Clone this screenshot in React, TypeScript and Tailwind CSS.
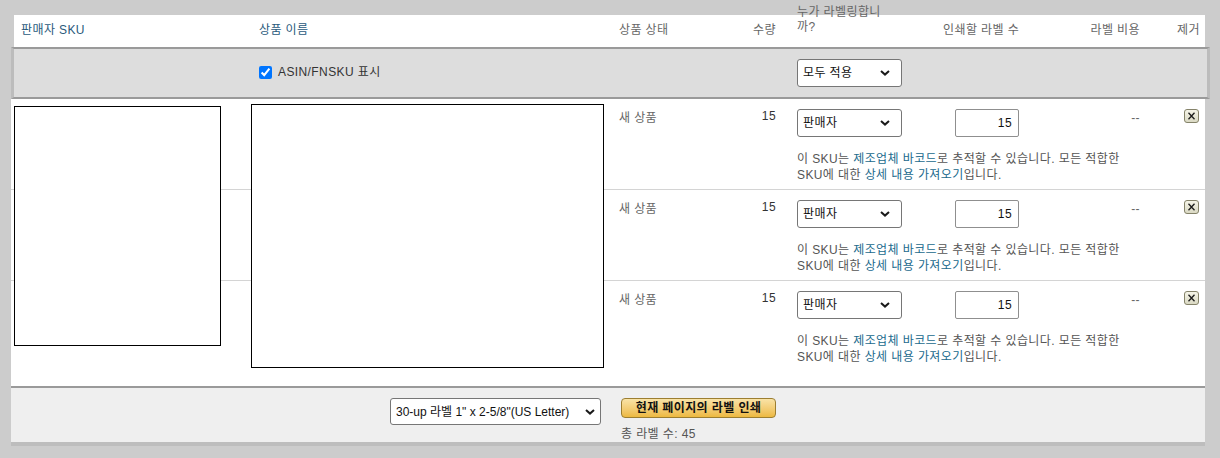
import type { ReactNode } from 'react'

// Colonne della griglia: l'intestazione parte 3px più a destra delle righe dati
const HEAD_COLS = 'grid grid-cols-[237px_361px_88px_90px_146px_126px_85px_58px]'
const ROW_COLS = 'grid grid-cols-[240px_361px_88px_90px_146px_126px_85px_58px]'

function Chevron({ className }: { className: string }) {
  return (
    <svg
      width="10"
      height="6"
      viewBox="0 0 10 6"
      className={`pointer-events-none absolute top-1/2 -translate-y-1/2 ${className}`}
    >
      <path d="M1 1l4 3.6L9 1" fill="none" stroke="#1a1a1a" strokeWidth="2" />
    </svg>
  )
}

function Select({
  value,
  className,
  chevron = 'right-[12px]',
}: {
  value: string
  className: string
  chevron?: string
}) {
  return (
    <div className={`relative ${className}`}>
      <select
        defaultValue={value}
        className="h-full w-full appearance-none rounded-[3px] border border-[#767676] bg-white pl-[5px] text-[12px] text-[#111]"
      >
        <option>{value}</option>
      </select>
      <Chevron className={chevron} />
    </div>
  )
}

function RemoveButton() {
  return (
    <svg width="15" height="14" viewBox="0 0 15 14">
      <defs>
        <linearGradient id="xg" x1="0" y1="0" x2="0" y2="1">
          <stop offset="0" stopColor="#f7f6ea" />
          <stop offset="1" stopColor="#d9d8c2" />
        </linearGradient>
      </defs>
      <rect x="0.5" y="0.5" width="14" height="13" rx="2.5" fill="url(#xg)" stroke="#85836a" />
      <path d="M4.5 3.8l6 6.4M10.5 3.8l-6 6.4" stroke="#1b1b1b" strokeWidth="1.3" />
    </svg>
  )
}

function Link({ children }: { children: ReactNode }) {
  return <span className="text-[#216a8d]">{children}</span>
}

function DataRow({ first, last }: { first?: boolean; last?: boolean }) {
  return (
    <div
      className={`${ROW_COLS} gap-y-[14px] pt-[10px] ${
        last ? 'pb-[21px]' : 'border-b border-[#d4d4d4] pb-[6px]'
      }`}
    >
      {/* Le immagini del primo prodotto si estendono sopra le righe successive */}
      <div className="h-0">
        {first && (
          <div className="relative z-10 -mt-[3px] ml-[3px] h-[240px] w-[207px] border border-black bg-white" />
        )}
      </div>
      <div className="h-0">
        {first && (
          <div className="relative z-10 -mt-[5px] h-[264px] w-[353px] border border-black bg-white" />
        )}
      </div>
      <div className="pl-[7px] pt-[1px] leading-[16px] text-[#666]">새 상품</div>
      <div className="pr-[14px] text-right leading-[14px] text-[#333]">15</div>
      <div className="pl-[7px]">
        <Select value="판매자" className="h-[28px] w-[105px]" />
      </div>
      <div className="pl-[19px]">
        <input
          defaultValue="15"
          className="h-[28px] w-[64px] rounded-[2px] border border-[#8f8f8f] bg-white pr-[6px] text-right text-[12px] text-[#111]"
        />
      </div>
      <div className="pr-[7px] pt-[1px] text-right leading-[16px] text-[#666]">--</div>
      <div className="flex justify-end pr-[6px]">
        <RemoveButton />
      </div>
      <div className="col-span-3 col-start-5 pl-[7px] pr-[7px] leading-[16px] text-[#555]">
        이 SKU는 <Link>제조업체 바코드</Link>로 추적할 수 있습니다. 모든 적합한 SKU에 대한{' '}
        <Link>상세 내용 가져오기</Link>입니다.
      </div>
    </div>
  )
}

export default function App() {
  return (
    <div className="min-h-[458px] bg-[#cccccc] pl-[11px] pt-[15px] font-['Liberation_Sans','Noto_Sans_CJK_KR',sans-serif] text-[12px] tracking-[0.4px]">
      {/* Intestazione della tabella */}
      <div
        className={`${HEAD_COLS} ml-[3px] h-[32px] w-[1191px] grid-rows-[23px] items-end bg-white pb-[9px] leading-[16px] text-[#666]`}
      >
        <div className="pl-[7px] text-[#2a5a7c]">판매자 SKU</div>
        <div className="pl-[8px] text-[#2a5a7c]">상품 이름</div>
        <div className="pl-[7px]">상품 상태</div>
        <div className="pr-[14px] text-right">수량</div>
        <div className="mb-[3px] w-[100px] pl-[7px] leading-[15px]">누가 라벨링합니까?</div>
        <div className="pl-[7px]">인쇄할 라벨 수</div>
        <div className="pr-[7px] text-right">라벨 비용</div>
        <div className="pr-[5px] text-right">제거</div>
      </div>

      {/* Riga "applica a tutti" */}
      <div className="w-[1199px] border-x-[3px] border-y-2 border-x-[#bcbcbc] border-y-[#9a9a9a] bg-[#dddddd] pr-[2px]">
        <div className={`${HEAD_COLS} h-[48px] items-start pt-[10px]`}>
          <div />
          <label className="flex items-center gap-[6px] pl-[8px] pt-[4px] text-[#333]">
            <input type="checkbox" defaultChecked className="m-0 h-[13px] w-[13px]" />
            ASIN/FNSKU 표시
          </label>
          <div />
          <div />
          <div className="pl-[7px]">
            <Select value="모두 적용" className="h-[28px] w-[105px]" />
          </div>
        </div>
      </div>

      {/* Righe dei prodotti */}
      <div className="w-[1194px] bg-white">
        <DataRow first />
        <DataRow />
        <DataRow last />
      </div>

      {/* Piede con formato etichette e stampa */}
      <div className="flex h-[60px] w-[1194px] border-b-4 border-t-2 border-b-[#bdbdbd] border-t-[#9a9a9a] bg-[#efefef] pt-[10px]">
        <div className="flex w-[601px] justify-end pr-[11px]">
          <Select
            value={'30-up 라벨 1" x 2-5/8"(US Letter)'}
            className="h-[27px] w-[211px] tracking-normal"
            chevron="right-[6px]"
          />
        </div>
        <div className="flex flex-col items-start pl-[9px]">
          <button className="h-[20px] w-[155px] rounded-[4px] border border-[#9c7e31] bg-linear-to-b from-[#f9e3a6] to-[#edb93f] text-[12px] font-bold leading-[18px] text-[#111]">
            현재 페이지의 라벨 인쇄
          </button>
          <div className="mt-[8px] leading-[16px] text-[#555]">총 라벨 수: 45</div>
        </div>
      </div>
    </div>
  )
}
